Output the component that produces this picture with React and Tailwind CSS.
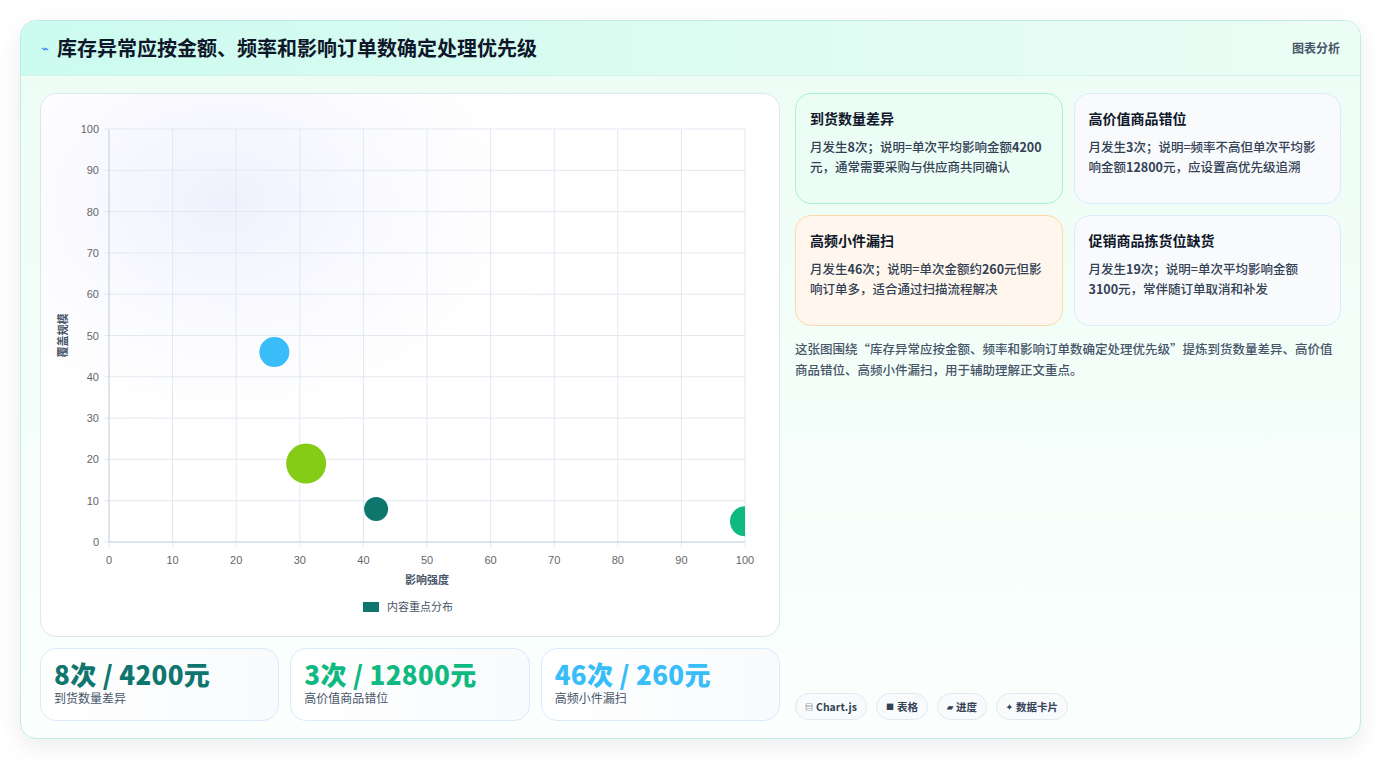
import React from "react";

const F = { fontFamily: '"Noto Sans CJK SC","Noto Sans",sans-serif' };

function Chart() {
  const x0 = 68, x1 = 704, y0 = 448, y1 = 35;
  const sx = (v) => x0 + (v / 100) * (x1 - x0);
  const sy = (v) => y0 - (v / 100) * (y0 - y1);
  const ticks = [0, 10, 20, 30, 40, 50, 60, 70, 80, 90, 100];
  const bubbles = [
    [26, 46, 15, "#38bdf8"],
    [31, 19, 20, "#84cc16"],
    [42, 8, 12, "#0f766e"],
    [100, 5, 15, "#10b981"],
  ];
  return (
    <svg width="738" height="542" className="block" style={F}>
      <defs>
        <radialGradient id="g" cx="0.25" cy="0.2" r="0.5">
          <stop offset="0" stopColor="#eef0fd" />
          <stop offset="1" stopColor="#ffffff" stopOpacity="0" />
        </radialGradient>
        <clipPath id="c"><rect x={x0} y={y1} width={x1 - x0} height={y0 - y1} /></clipPath>
      </defs>
      <rect width="738" height="542" fill="url(#g)" />
      {ticks.map((t) => (
        <g key={t}>
          <line x1={sx(t)} x2={sx(t)} y1={y1} y2={y0 + 5} stroke="#e2e8f0" />
          <line x1={x0 - 5} x2={x1} y1={sy(t)} y2={sy(t)} stroke="#e2e8f0" />
          <text x={sx(t)} y={y0 + 22} fontSize="11" fill="#666" textAnchor="middle" fontFamily="Liberation Sans">{t}</text>
          <text x={x0 - 10} y={sy(t) + 4} fontSize="11" fill="#666" textAnchor="end" fontFamily="Liberation Sans">{t}</text>
        </g>
      ))}
      <line x1={x0} x2={x0} y1={y1} y2={y0} stroke="#cbd5e1" />
      <line x1={x0} x2={x1} y1={y0} y2={y0} stroke="#cbd5e1" />
      <g clipPath="url(#c)">
        {bubbles.map(([x, y, r, c], i) => (
          <circle key={i} cx={sx(x)} cy={sy(y)} r={r} fill={c} />
        ))}
      </g>
      <text x={sx(50)} y={y0 + 42} fontSize="11" fill="#475569" textAnchor="middle" fontWeight="600">影响强度</text>
      <text transform={`translate(26 ${sy(50)}) rotate(-90)`} fontSize="11" fill="#475569" textAnchor="middle" fontWeight="600">覆盖规模</text>
      <rect x={322} y={508} width={16} height={10} fill="#0f766e" />
      <text x={346} y={517} fontSize="11" fill="#475569">内容重点分布</text>
    </svg>
  );
}

const Stat = ({ v, l, c }) => (
  <div className="flex-1 rounded-2xl border border-[#dbeafe] bg-gradient-to-r from-white to-[#f8fafc] px-[13px] py-[10px]">
    <div className={`text-[26px] font-extrabold leading-[30px] tracking-[0.3px] ${c}`}>{v}</div>
    <div className="text-[12px] text-[#475569]">{l}</div>
  </div>
);

const Card = ({ t, children, cls }) => (
  <div className={`rounded-2xl border pl-[14px] pr-[18px] py-[14px] ${cls}`}>
    <div className="text-[14px] font-bold text-[#0f172a] mb-[8px]">{t}</div>
    <div className="text-[12.5px] leading-[20px] text-[#334155] font-medium">{children}</div>
  </div>
);

const Chip = ({ i, t }) => (
  <div className="rounded-full border border-[#e2e8f0] bg-[#f8fafc] px-[9px] h-[27px] flex items-center gap-[3px] text-[10.5px] font-bold text-[#334155]">
    <span className="text-[8px]">{i}</span>{t}
  </div>
);

export default function App() {
  return (
    <div className="w-[1381px] h-[760px] bg-white p-[20px] pb-[21px]" style={F}>
      <div className="h-[719px] rounded-2xl border border-[#bfece4] bg-gradient-to-b from-[#ecfdf5] to-[#fbfffd] shadow-[0_8px_24px_rgba(15,23,42,0.08)] overflow-hidden flex flex-col">
        <div className="h-[55px] shrink-0 flex items-center justify-between px-[20px] bg-gradient-to-r from-[#ccfbef] to-[#ecfdf5] border-b border-[#d1f3ea]">
          <div className="flex items-center gap-[8px]">
            <span className="text-[#3b82f6] text-[13px]">⌁</span>
            <span className="text-[20px] font-bold text-[#0f172a]">库存异常应按金额、频率和影响订单数确定处理优先级</span>
          </div>
          <span className="text-[12px] font-semibold text-[#475569]">图表分析</span>
        </div>
        <div className="flex gap-[15px] px-[19px] pt-[17px] pb-[17px] flex-1">
          <div className="w-[740px] flex flex-col gap-[11px]">
            <div className="h-[544px] rounded-2xl border border-[#dde5ee] bg-white overflow-hidden">
              <Chart />
            </div>
            <div className="flex gap-[11px] h-[73px]">
              <Stat v="8次 / 4200元" l="到货数量差异" c="text-[#0f766e]" />
              <Stat v="3次 / 12800元" l="高价值商品错位" c="text-[#10b981]" />
              <Stat v="46次 / 260元" l="高频小件漏扫" c="text-[#38bdf8]" />
            </div>
          </div>
          <div className="flex-1 flex flex-col">
            <div className="grid grid-cols-2 gap-[11px]">
              <Card t="到货数量差异" cls="border-[#a7f3d0] bg-[#ecfdf5] h-[111px]">
                月发生<b>8</b>次；说明=单次平均影响金额<b>4200</b>元，通常需要采购与供应商共同确认
              </Card>
              <Card t="高价值商品错位" cls="border-[#dbeafe] bg-[#f8fafc] h-[111px]">
                月发生<b>3</b>次；说明=频率不高但单次平均影响金额<b>12800</b>元，应设置高优先级追溯
              </Card>
              <Card t="高频小件漏扫" cls="border-[#fcd9a8] bg-[#fff7ed] h-[111px]">
                月发生<b>46</b>次；说明=单次金额约<b>260</b>元但影响订单多，适合通过扫描流程解决
              </Card>
              <Card t="促销商品拣货位缺货" cls="border-[#dbeafe] bg-[#f8fafc] h-[111px]">
                月发生<b>19</b>次；说明=单次平均影响金额<b>3100</b>元，常伴随订单取消和补发
              </Card>
            </div>
            <p className="mt-[12px] text-[12.5px] leading-[21px] text-[#475569] font-medium">
              这张图围绕“库存异常应按金额、频率和影响订单数确定处理优先级”提炼到货数量差异、高价值商品错位、高频小件漏扫，用于辅助理解正文重点。
            </p>
            <div className="mt-auto flex gap-[9px] mb-[1px]">
              <Chip i="▤" t="Chart.js" />
              <Chip i="■" t="表格" />
              <Chip i="▰" t="进度" />
              <Chip i="✦" t="数据卡片" />
            </div>
          </div>
        </div>
      </div>
    </div>
  );
}
